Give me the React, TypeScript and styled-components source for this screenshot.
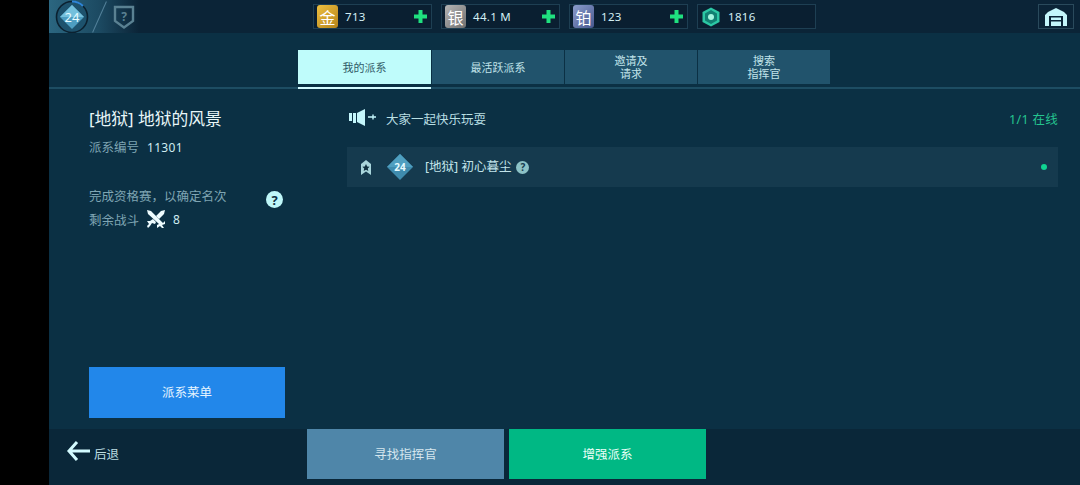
import React from "react";
import styled, { createGlobalStyle } from "styled-components";

const currencies = [
  { glyph: "金", value: "713", color: "linear-gradient(135deg,#eec040,#b5831a)", plus: true },
  { glyph: "银", value: "44.1 M", color: "linear-gradient(135deg,#b5b5b5,#6f6f6f)", plus: true },
  { glyph: "铂", value: "123", color: "linear-gradient(135deg,#8b9ccb,#47588f)", plus: true },
];

function App() {
  return (
    <Page>
      <GlobalStyle />
      <Side />
      <Main>
        <TopBar>
          <Rank>
            <svg width="40" height="33" viewBox="0 0 40 33">
              <circle cx="23" cy="17" r="15.5" fill="#1d526d" stroke="#0b2130" strokeWidth="1.6" />
              <path d="M23 1.5 A15.5 15.5 0 0 1 34 6" fill="none" stroke="#2f86d8" strokeWidth="2" />
              <path d="M23 5 L35 17 L23 29 L11 17 Z" fill="#4d9dc0" />
              <path d="M23 5 L35 17 L11 17 Z" fill="#74c0dc" />
              <text x="23" y="22" textAnchor="middle" fontSize="13" fill="#e6fbff" fontFamily="Noto Sans">
                24
              </text>
            </svg>
            <Slash />
            <svg width="22" height="33" viewBox="0 0 22 33">
              <path d="M2 7 H20 V21 L11 27.5 L2 21 Z" fill="none" stroke="#5a8192" strokeWidth="2.4" />
              <text x="11" y="21" textAnchor="middle" fontSize="12" fontWeight="700" fill="#5a8192" fontFamily="Noto Sans">
                ?
              </text>
            </svg>
          </Rank>
          <Chips>
            {currencies.map((c) => (
              <Chip key={c.glyph}>
                <Coin $bg={c.color}>{c.glyph}</Coin>
                <ChipValue>{c.value}</ChipValue>
                <Plus>
                  <svg width="13" height="13" viewBox="0 0 13 13">
                    <path d="M4.5 0 H8.5 V4.5 H13 V8.5 H8.5 V13 H4.5 V8.5 H0 V4.5 H4.5 Z" fill="#1fe07f" />
                  </svg>
                </Plus>
              </Chip>
            ))}
            <Chip>
              <GemIcon>
                <svg width="18" height="20" viewBox="0 0 18 20">
                  <path d="M9 0.5 L17.5 5 V15 L9 19.5 L0.5 15 V5 Z" fill="#2cc7a4" />
                  <path d="M9 3 L15 6.5 V13.5 L9 17 L3 13.5 V6.5 Z" fill="#128072" />
                  <circle cx="9" cy="10" r="3" fill="#a4f5df" />
                </svg>
              </GemIcon>
              <ChipValue>1816</ChipValue>
            </Chip>
          </Chips>
          <HomeButton>
            <svg width="22" height="18" viewBox="0 0 22 18">
              <path
                d="M11 0 L19 4 L22 7 V18 H18 V8 H4 V18 H0 V7 L3 4 Z M6 9.5 H16 V12 H6 Z M6 13.5 H16 V18 H6 Z"
                fill="#c4f6fb"
              />
            </svg>
          </HomeButton>
        </TopBar>

        <TabBar>
          <Tab $active>我的派系</Tab>
          <Tab>最活跃派系</Tab>
          <Tab>
            邀请及
            <br />
            请求
          </Tab>
          <Tab>
            搜索
            <br />
            指挥官
          </Tab>
        </TabBar>

        <Content>
          <InfoColumn>
            <div>
              <FactionName>[地狱] 地狱的风景</FactionName>
              <MetaRow>
                <Muted>派系编号</Muted>
                <Value>11301</Value>
              </MetaRow>
              <Qualify>
                <div>
                  <Muted>完成资格赛，以确定名次</Muted>
                  <BattleRow>
                    <Muted>剩余战斗</Muted>
                    <svg width="20" height="20" viewBox="0 0 20 20">
                      <path
                        d="M1 1 L5 2 L17 14 L19 12 L19 15 L16 16 L18 19 L16 19 L14 17 L11 19 L11 16 L13 15 L2 5 Z"
                        fill="#eefcff"
                      />
                      <path
                        d="M19 1 L15 2 L10 7 L13 10 L18 5 Z M7 10 L10 13 L9 15 L6 14 L4 17 L2 19 L1 17 L3 15 L1 12 L4 12 Z"
                        fill="#eefcff"
                      />
                    </svg>
                    <Value>8</Value>
                  </BattleRow>
                </div>
                <HelpMark>?</HelpMark>
              </Qualify>
            </div>
            <MenuButton>派系菜单</MenuButton>
          </InfoColumn>

          <MemberColumn>
            <MotdRow>
              <Motd>
                <svg width="28" height="18" viewBox="0 0 28 18">
                  <path
                    d="M0 4 H3 V12 H0 Z M4 4 H7 V14 H4 Z M8 4 L16 0 V17 L8 13 Z"
                    fill="#c4f6fb"
                  />
                  <path d="M19 8 H24 M24 5.5 V10.5 M24 8 H27" stroke="#c4f6fb" strokeWidth="1.4" fill="none" />
                </svg>
                <MotdText>大家一起快乐玩耍</MotdText>
              </Motd>
              <OnlineCount>1/1 在线</OnlineCount>
            </MotdRow>
            <MemberRow>
              <svg width="10" height="15" viewBox="0 0 10 15">
                <path d="M5 0 L10 4 V15 L5 11.5 L0 15 V4 Z" fill="#a9d6dc" />
                <path d="M5 4 L6.2 6.6 L8.6 6.8 L6.8 8.4 L7.3 11 L5 9.7 L2.7 11 L3.2 8.4 L1.4 6.8 L3.8 6.6 Z" fill="#10303f" />
              </svg>
              <LevelDiamond>
                <svg width="28" height="28" viewBox="0 0 28 28">
                  <path d="M14 1 L27 14 L14 27 L1 14 Z" fill="#3f8cae" />
                  <path d="M14 1 L27 14 L1 14 Z" fill="#4f9fc0" />
                  <text x="14" y="18" textAnchor="middle" fontSize="10" fontWeight="700" fill="#e6fbff" fontFamily="Noto Sans">
                    24
                  </text>
                </svg>
              </LevelDiamond>
              <MemberName>[地狱] 初心暮尘</MemberName>
              <SmallHelp>?</SmallHelp>
              <OnlineDot />
            </MemberRow>
          </MemberColumn>
        </Content>

        <Footer>
          <BackButton>
            <BackArrow>
              <svg width="24" height="22" viewBox="0 0 24 22">
                <path d="M11 2 L3 11 L11 20 M3 11 H24" fill="none" stroke="#d3fbff" strokeWidth="3" />
              </svg>
            </BackArrow>
            <BackText>后退</BackText>
          </BackButton>
          <FooterButton $bg="#4f86a9" $color="#d6e6ee">寻找指挥官</FooterButton>
          <FooterButton $bg="#00b884" $color="#eafff8">增强派系</FooterButton>
        </Footer>
      </Main>
    </Page>
  );
}

export default App;

const GlobalStyle = createGlobalStyle`
  html, body {
    margin: 0;
    padding: 0;
    background: #000;
    font-family: "Noto Sans", "Noto Sans CJK SC", sans-serif;
  }
`;

const Page = styled.div`
  display: flex;
  width: 1080px;
  height: 485px;
  overflow: hidden;
`;

const Side = styled.div`
  width: 49px;
  background: #000;
  flex-shrink: 0;
`;

const Main = styled.div`
  flex: 1;
  display: flex;
  flex-direction: column;
  background: #0b3044;
`;

const TopBar = styled.div`
  height: 33px;
  display: flex;
  align-items: flex-start;
  background: #0b2437;
  flex-shrink: 0;
`;

const Rank = styled.div`
  width: 100px;
  height: 33px;
  display: flex;
  align-items: center;
  overflow: hidden;
  background: linear-gradient(90deg, #2b6680 0%, #1c4a62 50%, #0b2437 90%);
  svg {
    flex-shrink: 0;
  }
`;

const Slash = styled.div`
  width: 1px;
  height: 34px;
  margin: 0 13px 0 10px;
  background: #53819a;
  transform: rotate(24deg);
  flex-shrink: 0;
`;

const Chips = styled.div`
  display: flex;
  gap: 9px;
  margin: 4px 0 0 164px;
`;

const Chip = styled.div`
  width: 119px;
  height: 25px;
  box-sizing: border-box;
  display: flex;
  align-items: center;
  border: 1px solid #1e3f53;
  background: #0a1f31;
`;

const Coin = styled.span<{ $bg: string }>`
  width: 21px;
  height: 23px;
  margin-left: 3px;
  display: flex;
  align-items: center;
  justify-content: center;
  border-radius: 3px;
  font-size: 16px;
  color: #fff;
  background: ${(p) => p.$bg};
`;

const GemIcon = styled.span`
  margin-left: 3px;
  width: 20px;
  display: flex;
  justify-content: center;
`;

const ChipValue = styled.span`
  margin-left: 7px;
  flex: 1;
  font-size: 11.5px;
  letter-spacing: 0.3px;
  color: #d3eef3;
`;

const Plus = styled.span`
  display: flex;
  margin-right: 4px;
`;

const HomeButton = styled.div`
  margin: 4px 6px 0 auto;
  width: 36px;
  height: 25px;
  box-sizing: border-box;
  border: 1px solid #2a4a5c;
  display: flex;
  align-items: center;
  justify-content: center;
`;

const TabBar = styled.div`
  height: 56px;
  box-sizing: border-box;
  padding: 17px 0 0 249px;
  display: flex;
  gap: 1px;
  border-bottom: 2px solid #1d4d63;
  flex-shrink: 0;
`;

const Tab = styled.div<{ $active?: boolean }>`
  width: 132px;
  height: ${(p) => (p.$active ? "39px" : "34px")};
  box-sizing: border-box;
  padding-bottom: ${(p) => (p.$active ? "5px" : "0")};
  display: flex;
  align-items: center;
  justify-content: center;
  text-align: center;
  font-size: 11px;
  line-height: 13px;
  color: ${(p) => (p.$active ? "#2f5a66" : "#c2e4ea")};
  background: ${(p) =>
    p.$active
      ? "linear-gradient(#bffcfb 0, #bffcfb 34px, transparent 34px, transparent 37px, #d3fbff 37px)"
      : "#21536c"};
  &:first-child {
    width: 133px;
  }
`;

const Content = styled.div`
  flex: 1;
  display: flex;
  min-height: 0;
  padding: 0 22px 11px 40px;
`;

const InfoColumn = styled.div`
  width: 196px;
  display: flex;
  flex-direction: column;
  justify-content: space-between;
  flex-shrink: 0;
`;

const FactionName = styled.div`
  margin-top: 20px;
  font-size: 16.8px;
  line-height: 20px;
  color: #e8f6f8;
`;

const MetaRow = styled.div`
  margin-top: 10px;
  display: flex;
  gap: 8px;
  align-items: center;
  line-height: 18px;
`;

const Muted = styled.span`
  font-size: 12.5px;
  color: #7fa5b3;
`;

const Value = styled.span`
  font-size: 12px;
  letter-spacing: 0.3px;
  color: #cfecf1;
`;

const Qualify = styled.div`
  margin-top: 27px;
  display: flex;
  align-items: flex-start;
  justify-content: space-between;
`;

const BattleRow = styled.div`
  margin-top: 3px;
  display: flex;
  align-items: center;
  gap: 7px;
`;

const HelpMark = styled.span`
  width: 17px;
  height: 17px;
  margin: 7px 2px 0 0;
  border-radius: 50%;
  background: #bff7f9;
  color: #0e2f42;
  font-size: 13px;
  font-weight: 700;
  display: flex;
  align-items: center;
  justify-content: center;
`;

const MenuButton = styled.div`
  height: 51px;
  padding-bottom: 2px;
  box-sizing: border-box;
  display: flex;
  align-items: center;
  justify-content: center;
  background: #2287ea;
  color: #e6f5ff;
  font-size: 12.5px;
`;

const MemberColumn = styled.div`
  flex: 1;
  margin-left: 62px;
`;

const MotdRow = styled.div`
  margin-top: 19px;
  height: 20px;
  display: flex;
  align-items: center;
  justify-content: space-between;
`;

const Motd = styled.div`
  display: flex;
  align-items: center;
  gap: 9px;
  margin-left: 2px;
`;

const MotdText = styled.span`
  font-size: 12.5px;
  color: #b9dfe3;
`;

const OnlineCount = styled.span`
  font-size: 12.5px;
  letter-spacing: 0.3px;
  color: #25c48f;
`;

const MemberRow = styled.div`
  margin-top: 19px;
  height: 40px;
  display: flex;
  align-items: center;
  padding: 0 11px 0 14px;
  background: #153a4e;
`;

const LevelDiamond = styled.span`
  display: flex;
  margin: -1px 0 0 15px;
`;

const MemberName = styled.span`
  margin: 0 0 3px 11px;
  font-size: 12.5px;
  color: #c2e4ea;
`;

const SmallHelp = styled.span`
  margin-left: 5px;
  width: 13px;
  height: 13px;
  border-radius: 50%;
  background: #8cc2c6;
  color: #163a4e;
  font-size: 10px;
  font-weight: 700;
  display: flex;
  align-items: center;
  justify-content: center;
`;

const OnlineDot = styled.span`
  margin-left: auto;
  width: 6px;
  height: 6px;
  border-radius: 50%;
  background: #10d492;
`;

const Footer = styled.div`
  height: 56px;
  display: flex;
  gap: 5px;
  align-items: flex-start;
  background: #0a2739;
  flex-shrink: 0;
`;

const BackButton = styled.div`
  width: 253px;
  height: 50px;
  padding: 0 0 2px 17px;
  box-sizing: border-box;
  display: flex;
  align-items: center;
  gap: 4px;
`;

const BackArrow = styled.span`
  display: flex;
  margin-bottom: 4px;
`;

const BackText = styled.span`
  font-size: 12.5px;
  color: #bcdde2;
`;

const FooterButton = styled.div<{ $bg: string; $color: string }>`
  width: 197px;
  height: 50px;
  padding-bottom: 2px;
  box-sizing: border-box;
  display: flex;
  align-items: center;
  justify-content: center;
  font-size: 12.5px;
  background: ${(p) => p.$bg};
  color: ${(p) => p.$color};
`;
